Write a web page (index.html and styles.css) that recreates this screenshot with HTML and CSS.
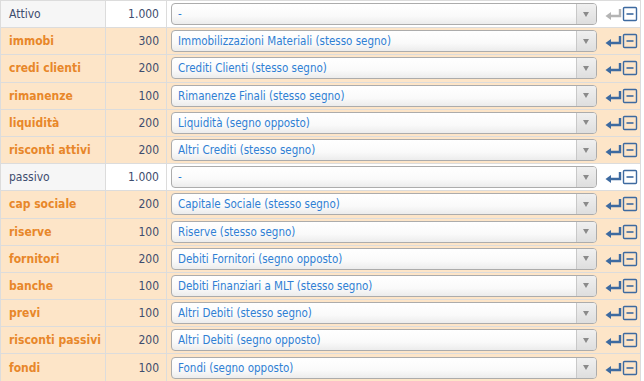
FILE: index.html
```html
<!DOCTYPE html>
<html>
  <head>
    <meta charset="UTF-8" />
    <title>Mappatura voci</title>
    <link rel="stylesheet" href="styles.css">
  </head>
  <body>
    <table class="map-table">
      <tr class="row-total">
        <td class="name">Attivo</td>
        <td class="amount">1.000</td>
        <td class="pick"><div class="select"><span class="select-text">-</span><span class="select-arrow"></span></div></td>
        <td class="tools"><svg class="tool-icon muted" viewBox="0 0 34 16"><path class="arrow" d="M15 3 V10 H5"/><path class="head" d="M0.5 10 L6 6 V14 Z"/><rect class="box" x="18.5" y="1.5" width="13" height="13" rx="1"/><path class="minus" d="M21.5 8 H28.5"/></svg></td>
      </tr>
      <tr class="row-item">
        <td class="name">immobi</td>
        <td class="amount">300</td>
        <td class="pick"><div class="select"><span class="select-text">Immobilizzazioni Materiali (stesso segno)</span><span class="select-arrow"></span></div></td>
        <td class="tools"><svg class="tool-icon" viewBox="0 0 34 16"><path class="arrow" d="M15 3 V10 H5"/><path class="head" d="M0.5 10 L6 6 V14 Z"/><rect class="box" x="18.5" y="1.5" width="13" height="13" rx="1"/><path class="minus" d="M21.5 8 H28.5"/></svg></td>
      </tr>
      <tr class="row-item">
        <td class="name">credi clienti</td>
        <td class="amount">200</td>
        <td class="pick"><div class="select"><span class="select-text">Crediti Clienti (stesso segno)</span><span class="select-arrow"></span></div></td>
        <td class="tools"><svg class="tool-icon" viewBox="0 0 34 16"><path class="arrow" d="M15 3 V10 H5"/><path class="head" d="M0.5 10 L6 6 V14 Z"/><rect class="box" x="18.5" y="1.5" width="13" height="13" rx="1"/><path class="minus" d="M21.5 8 H28.5"/></svg></td>
      </tr>
      <tr class="row-item">
        <td class="name">rimanenze</td>
        <td class="amount">100</td>
        <td class="pick"><div class="select"><span class="select-text">Rimanenze Finali (stesso segno)</span><span class="select-arrow"></span></div></td>
        <td class="tools"><svg class="tool-icon" viewBox="0 0 34 16"><path class="arrow" d="M15 3 V10 H5"/><path class="head" d="M0.5 10 L6 6 V14 Z"/><rect class="box" x="18.5" y="1.5" width="13" height="13" rx="1"/><path class="minus" d="M21.5 8 H28.5"/></svg></td>
      </tr>
      <tr class="row-item">
        <td class="name">liquidità</td>
        <td class="amount">200</td>
        <td class="pick"><div class="select"><span class="select-text">Liquidità (segno opposto)</span><span class="select-arrow"></span></div></td>
        <td class="tools"><svg class="tool-icon" viewBox="0 0 34 16"><path class="arrow" d="M15 3 V10 H5"/><path class="head" d="M0.5 10 L6 6 V14 Z"/><rect class="box" x="18.5" y="1.5" width="13" height="13" rx="1"/><path class="minus" d="M21.5 8 H28.5"/></svg></td>
      </tr>
      <tr class="row-item">
        <td class="name">risconti attivi</td>
        <td class="amount">200</td>
        <td class="pick"><div class="select"><span class="select-text">Altri Crediti (stesso segno)</span><span class="select-arrow"></span></div></td>
        <td class="tools"><svg class="tool-icon" viewBox="0 0 34 16"><path class="arrow" d="M15 3 V10 H5"/><path class="head" d="M0.5 10 L6 6 V14 Z"/><rect class="box" x="18.5" y="1.5" width="13" height="13" rx="1"/><path class="minus" d="M21.5 8 H28.5"/></svg></td>
      </tr>
      <tr class="row-total">
        <td class="name">passivo</td>
        <td class="amount">1.000</td>
        <td class="pick"><div class="select"><span class="select-text">-</span><span class="select-arrow"></span></div></td>
        <td class="tools"><svg class="tool-icon" viewBox="0 0 34 16"><path class="arrow" d="M15 3 V10 H5"/><path class="head" d="M0.5 10 L6 6 V14 Z"/><rect class="box" x="18.5" y="1.5" width="13" height="13" rx="1"/><path class="minus" d="M21.5 8 H28.5"/></svg></td>
      </tr>
      <tr class="row-item">
        <td class="name">cap sociale</td>
        <td class="amount">200</td>
        <td class="pick"><div class="select"><span class="select-text">Capitale Sociale (stesso segno)</span><span class="select-arrow"></span></div></td>
        <td class="tools"><svg class="tool-icon" viewBox="0 0 34 16"><path class="arrow" d="M15 3 V10 H5"/><path class="head" d="M0.5 10 L6 6 V14 Z"/><rect class="box" x="18.5" y="1.5" width="13" height="13" rx="1"/><path class="minus" d="M21.5 8 H28.5"/></svg></td>
      </tr>
      <tr class="row-item">
        <td class="name">riserve</td>
        <td class="amount">100</td>
        <td class="pick"><div class="select"><span class="select-text">Riserve (stesso segno)</span><span class="select-arrow"></span></div></td>
        <td class="tools"><svg class="tool-icon" viewBox="0 0 34 16"><path class="arrow" d="M15 3 V10 H5"/><path class="head" d="M0.5 10 L6 6 V14 Z"/><rect class="box" x="18.5" y="1.5" width="13" height="13" rx="1"/><path class="minus" d="M21.5 8 H28.5"/></svg></td>
      </tr>
      <tr class="row-item">
        <td class="name">fornitori</td>
        <td class="amount">200</td>
        <td class="pick"><div class="select"><span class="select-text">Debiti Fornitori (segno opposto)</span><span class="select-arrow"></span></div></td>
        <td class="tools"><svg class="tool-icon" viewBox="0 0 34 16"><path class="arrow" d="M15 3 V10 H5"/><path class="head" d="M0.5 10 L6 6 V14 Z"/><rect class="box" x="18.5" y="1.5" width="13" height="13" rx="1"/><path class="minus" d="M21.5 8 H28.5"/></svg></td>
      </tr>
      <tr class="row-item">
        <td class="name">banche</td>
        <td class="amount">100</td>
        <td class="pick"><div class="select"><span class="select-text">Debiti Finanziari a MLT (stesso segno)</span><span class="select-arrow"></span></div></td>
        <td class="tools"><svg class="tool-icon" viewBox="0 0 34 16"><path class="arrow" d="M15 3 V10 H5"/><path class="head" d="M0.5 10 L6 6 V14 Z"/><rect class="box" x="18.5" y="1.5" width="13" height="13" rx="1"/><path class="minus" d="M21.5 8 H28.5"/></svg></td>
      </tr>
      <tr class="row-item">
        <td class="name">previ</td>
        <td class="amount">100</td>
        <td class="pick"><div class="select"><span class="select-text">Altri Debiti (stesso segno)</span><span class="select-arrow"></span></div></td>
        <td class="tools"><svg class="tool-icon" viewBox="0 0 34 16"><path class="arrow" d="M15 3 V10 H5"/><path class="head" d="M0.5 10 L6 6 V14 Z"/><rect class="box" x="18.5" y="1.5" width="13" height="13" rx="1"/><path class="minus" d="M21.5 8 H28.5"/></svg></td>
      </tr>
      <tr class="row-item">
        <td class="name">risconti passivi</td>
        <td class="amount">200</td>
        <td class="pick"><div class="select"><span class="select-text">Altri Debiti (segno opposto)</span><span class="select-arrow"></span></div></td>
        <td class="tools"><svg class="tool-icon" viewBox="0 0 34 16"><path class="arrow" d="M15 3 V10 H5"/><path class="head" d="M0.5 10 L6 6 V14 Z"/><rect class="box" x="18.5" y="1.5" width="13" height="13" rx="1"/><path class="minus" d="M21.5 8 H28.5"/></svg></td>
      </tr>
      <tr class="row-item">
        <td class="name">fondi</td>
        <td class="amount">100</td>
        <td class="pick"><div class="select"><span class="select-text">Fondi (segno opposto)</span><span class="select-arrow"></span></div></td>
        <td class="tools"><svg class="tool-icon" viewBox="0 0 34 16"><path class="arrow" d="M15 3 V10 H5"/><path class="head" d="M0.5 10 L6 6 V14 Z"/><rect class="box" x="18.5" y="1.5" width="13" height="13" rx="1"/><path class="minus" d="M21.5 8 H28.5"/></svg></td>
      </tr>
    </table>
  </body>
</html>
```

FILE: styles.css
```css
* {
  box-sizing: border-box;
  margin: 0;
  padding: 0;
}

body {
  background: #ffffff;
  font-family: "DejaVu Sans Condensed", "DejaVu Sans", sans-serif;
  font-size: 12px;
  color: #3e4d6e;
}

.map-table {
  width: 641px;
  border-collapse: collapse;
  table-layout: fixed;
}

.map-table td {
  height: 27.2px;
  border: 1px solid #dcdcdc;
  vertical-align: middle;
  white-space: nowrap;
}

.name {
  width: 105px;
  padding-left: 8px;
}

.amount {
  width: 61px;
  text-align: right;
  padding-right: 7px;
}

.pick {
  width: 434px;
  padding: 0 4px 0 4px;
  border-right: none !important;
}

.tools {
  border-left: none !important;
  padding-left: 4px;
}

/* righe */
.row-total .name {
  background: #f6f6f6;
  color: #3e4d6e;
}

.row-total .amount,
.row-total .pick,
.row-total .tools {
  background: #ffffff;
}

.row-item td {
  background: #fde5c8;
}

.row-item .name {
  color: #e8872a;
  font-weight: bold;
}

/* select finta */
.select {
  display: flex;
  align-items: center;
  height: 22px;
  border: 1px solid #acacac;
  border-radius: 4px;
  background: linear-gradient(#ffffff 0%, #fafafa 60%, #ececec 100%);
  overflow: hidden;
}

.select-text {
  flex: 1;
  padding-left: 6px;
  font-size: 11.5px;
  color: #2f7fd4;
}

.select-arrow {
  width: 20px;
  height: 100%;
  border-left: 1px solid #c8c8c8;
  background: linear-gradient(#f0f0f0 0%, #dedede 100%);
  display: flex;
  align-items: center;
  justify-content: center;
}

.select-arrow::after {
  content: "";
  border-left: 3px solid transparent;
  border-right: 3px solid transparent;
  border-top: 5px solid #8a8a8a;
}

/* icone */
.tool-icon {
  display: block;
  width: 34px;
  height: 16px;
}

.tool-icon .arrow {
  fill: none;
  stroke: #3d6aa0;
  stroke-width: 2.4;
}

.tool-icon .head {
  fill: #3d6aa0;
}

.tool-icon .box {
  fill: none;
  stroke: #3d6aa0;
  stroke-width: 1.4;
}

.tool-icon .minus {
  stroke: #3d6aa0;
  stroke-width: 1.6;
}

.tool-icon.muted .arrow {
  stroke: #b4b4b4;
}

.tool-icon.muted .head {
  fill: #b4b4b4;
}
```
